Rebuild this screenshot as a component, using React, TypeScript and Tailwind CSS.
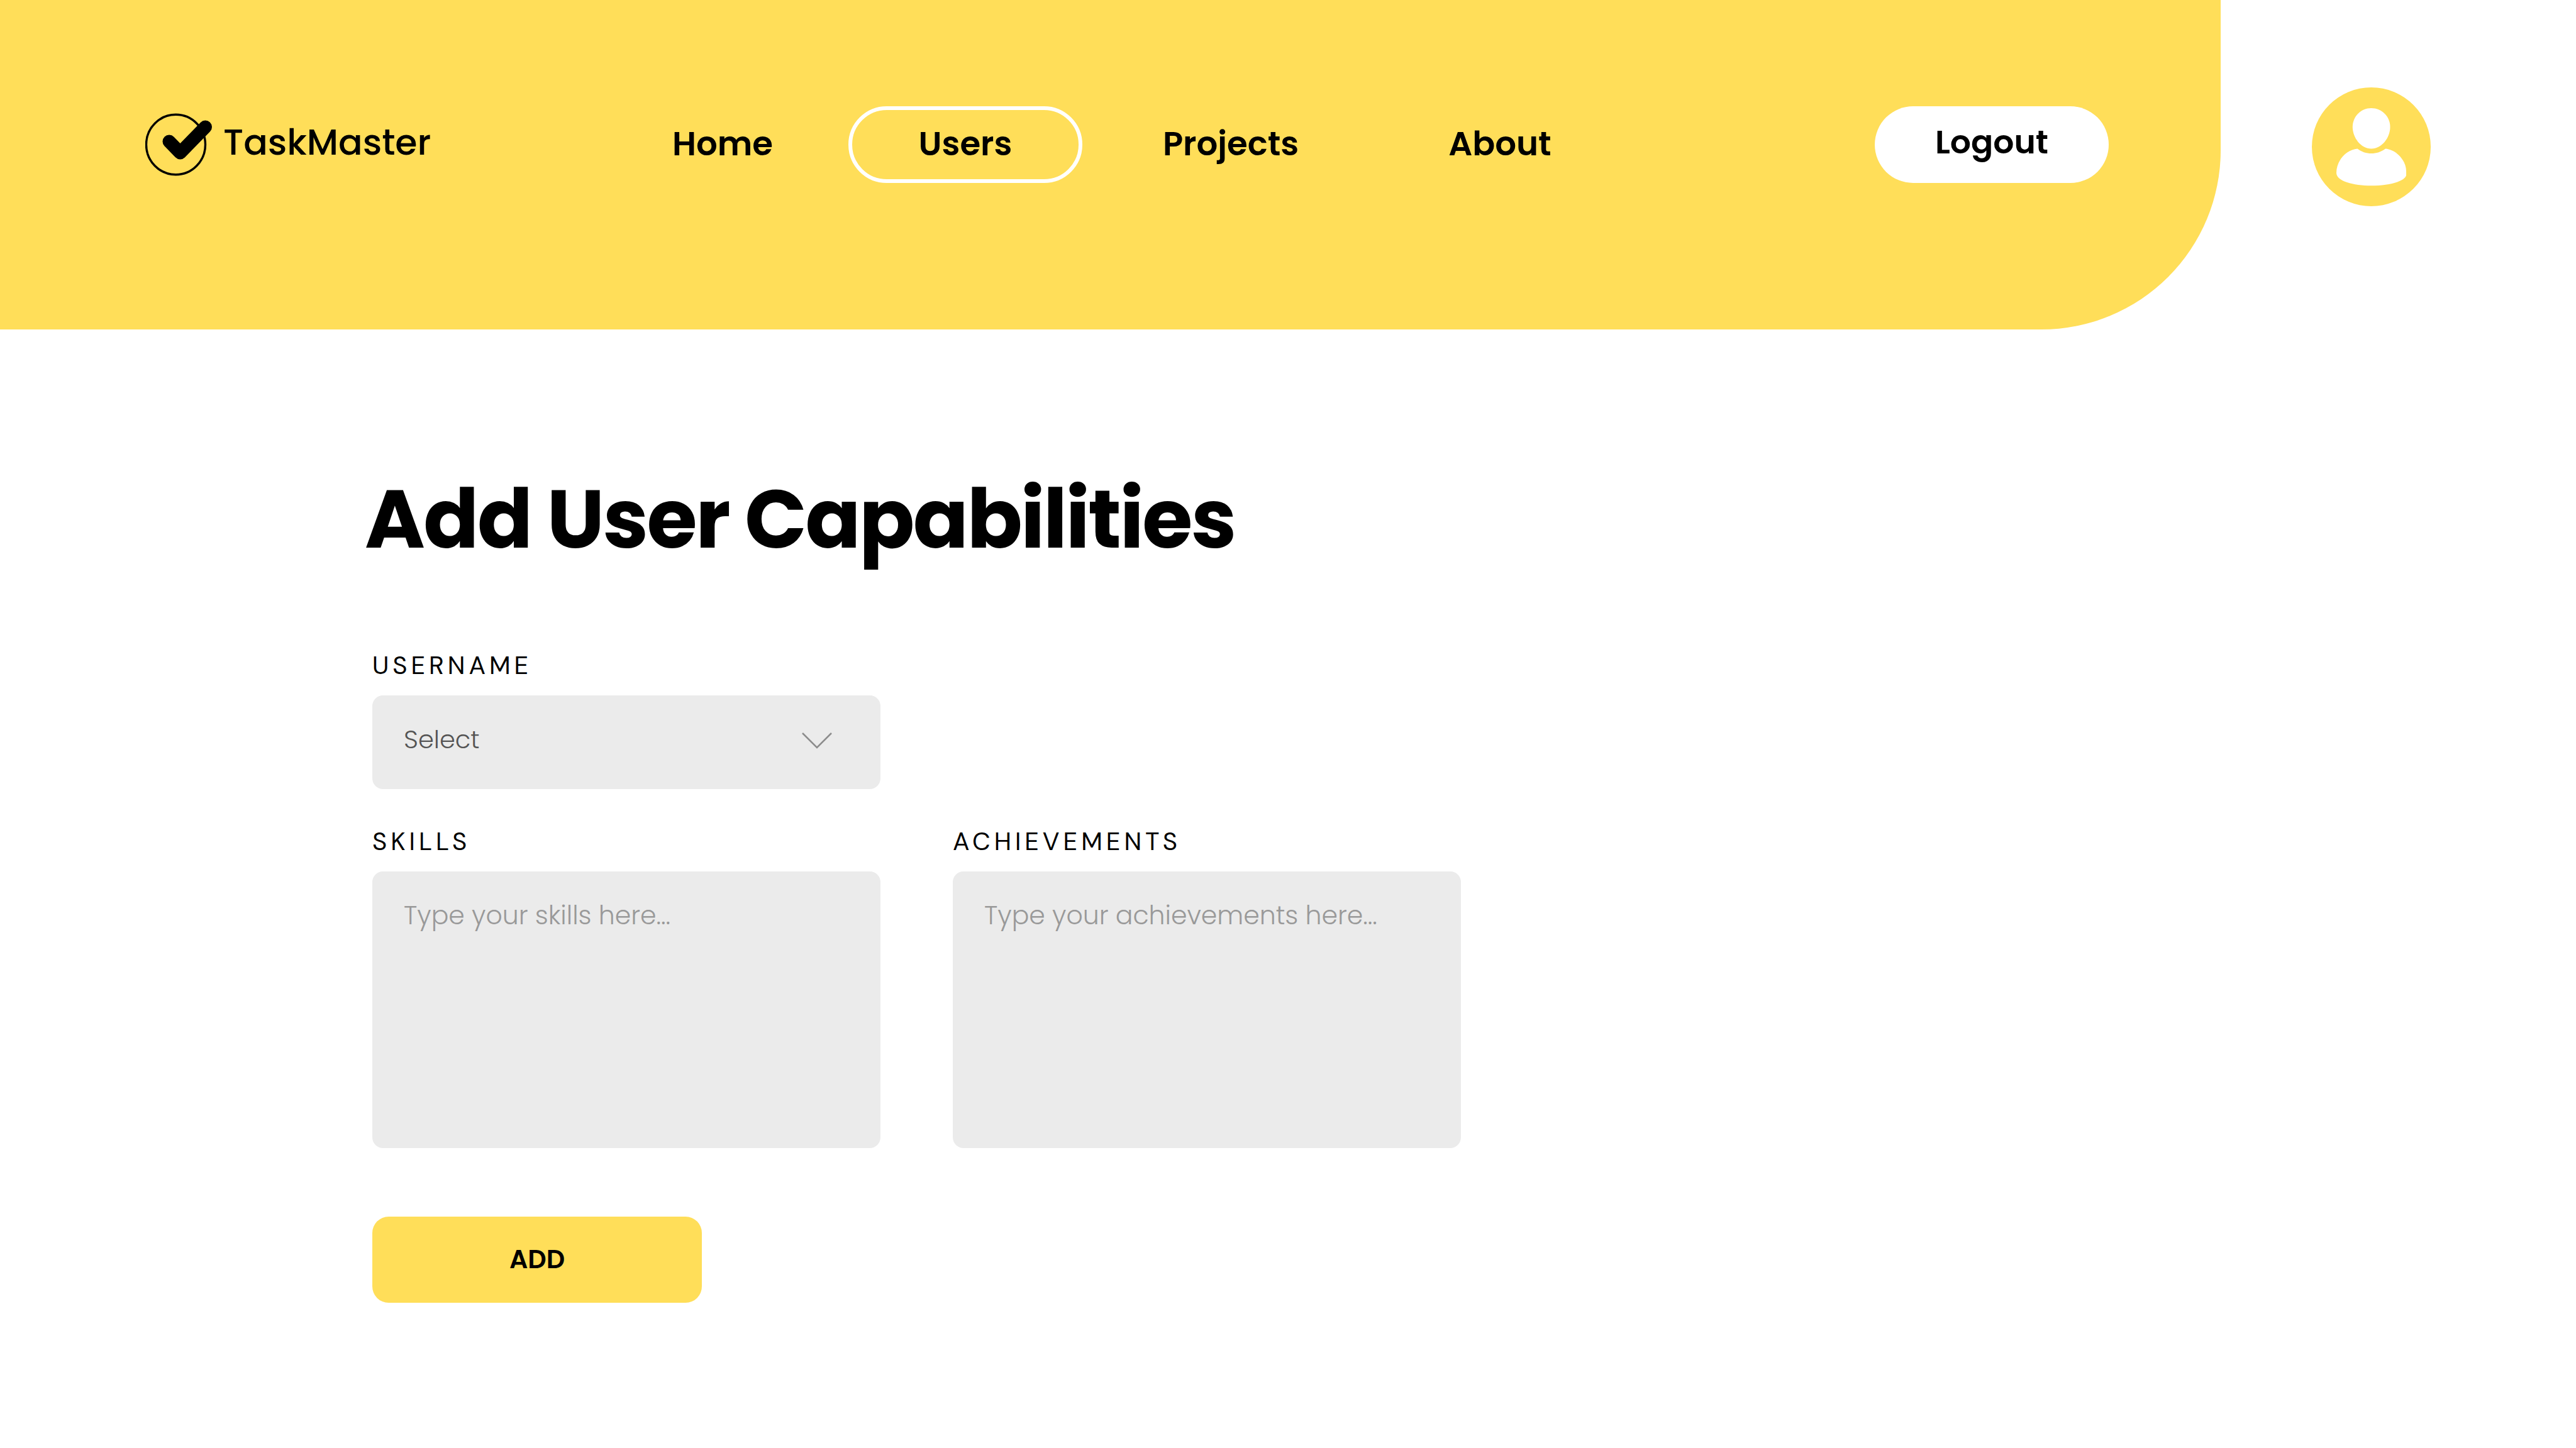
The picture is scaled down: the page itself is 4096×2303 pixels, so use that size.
import type { ReactNode } from "react";

const navLinks = [
  { label: "Home", cell: "w-[400px]", active: false },
  { label: "Users", cell: "w-[372px]", active: true },
  { label: "Projects", cell: "w-[472px]", active: false },
  { label: "About", cell: "w-[384px]", active: false },
];

function LogoMark() {
  return (
    <svg className="h-[100px] w-[108px] shrink-0" viewBox="0 0 108 100" fill="none" aria-hidden="true">
      <ellipse cx="48.5" cy="50" rx="47" ry="47.7" stroke="#000" strokeWidth="3.4" />
      <path
        d="M38 45 55.500 63 95.500 22"
        stroke="#000"
        strokeWidth="21"
        strokeLinecap="round"
        strokeLinejoin="round"
      />
    </svg>
  );
}

function Avatar() {
  return (
    <svg className="h-[189px] w-[189px]" viewBox="0 0 189 189" aria-hidden="true">
      <circle cx="94.500" cy="94.500" r="94.500" fill="#FFDE59" />
      <path
        d="M94.500 33C111 33 124.500 46 124.500 63C124.500 80 111 97.500 94.500 97.500C78 97.500 64.800 80 64.800 63C64.800 46 78 33 94.500 33Z"
        fill="#fff"
      />
      <path
        d="M72.500 97.500C85 107.500 104 107.500 117 97.500C135 99 150 117 150 133V140C147 150 122 156.300 94.500 156.300C66 156.300 39 149 39 136C39 116 55 99 72.500 97.500Z"
        fill="#fff"
      />
    </svg>
  );
}

function Field({ id, label, children }: { id: string; label: string; children: ReactNode }) {
  return (
    <div className="flex flex-col gap-[24px]">
      <label
        htmlFor={id}
        className="font-['DM_Sans','Poppins',sans-serif] text-[40px] leading-[48px] tracking-[6px] uppercase"
      >
        {label}
      </label>
      {children}
    </div>
  );
}

const textareaStyle =
  "block h-[440px] w-full resize-none rounded-[17px] bg-[#EBEBEB] px-[50px] pt-[42px] text-[41px] leading-[56px] font-light text-[#545454] outline-none placeholder:text-[#999999] placeholder:opacity-100";

export default function App() {
  return (
    <div className="min-h-screen bg-white font-['Poppins','Inter',sans-serif] text-black">
      <header className="flex">
        <div className="flex h-[524px] flex-1 items-start rounded-br-[285px] bg-[#FFDE59] pt-[169px] pr-[178px] pl-[231px]">
          <a href="#" className="flex h-[122px] w-[718px] items-center gap-[16px]">
            <LogoMark />
            <span className="pb-2 text-[57px] leading-none font-medium">TaskMaster</span>
          </a>
          <nav className="flex text-[53px] leading-none font-semibold">
            {navLinks.map((link) => (
              <a
                key={link.label}
                href="#"
                aria-current={link.active ? "page" : undefined}
                className={`flex h-[122px] items-center justify-center pb-1 ${link.cell} ${
                  link.active ? "rounded-full border-6 border-white" : ""
                }`}
              >
                {link.label}
              </a>
            ))}
          </nav>
          <button
            type="button"
            className="ml-auto h-[122px] w-[372px] rounded-full bg-white pb-2 text-[52px] leading-none font-semibold"
          >
            Logout
          </button>
        </div>
        <div className="w-[565px] pt-[139px] pl-[145px]">
          <button type="button" aria-label="Account" className="block rounded-full">
            <Avatar />
          </button>
        </div>
      </header>

      <main className="px-[592px] pt-[227px]">
        <h1 className="-ml-3 text-[130px] leading-[150px] font-bold tracking-[-0.02em]">Add User Capabilities</h1>
        <form className="mt-[133px]" onSubmit={(e) => e.preventDefault()}>
          <div className="grid grid-cols-[808px_808px] gap-x-[115px] gap-y-[59px]">
            <Field id="username" label="Username">
              <div className="relative">
                <select
                  id="username"
                  defaultValue=""
                  className="block h-[149px] w-full appearance-none rounded-[17px] bg-[#EBEBEB] px-[50px] pb-[10px] text-[40px] font-light text-[#545454] outline-none"
                >
                  <option value="">Select</option>
                </select>
                <svg
                  className="pointer-events-none absolute top-[58px] right-[76px] h-[28px] w-[50px]"
                  viewBox="0 0 50 28"
                  fill="none"
                  aria-hidden="true"
                >
                  <path d="M2 2 25 25 48 2" stroke="#8C8C8C" strokeWidth="2.500" />
                </svg>
              </div>
            </Field>
            <div className="col-start-1">
              <Field id="skills" label="Skills">
                <textarea id="skills" placeholder="Type your skills here..." className={textareaStyle} />
              </Field>
            </div>
            <Field id="achievements" label="Achievements">
              <textarea id="achievements" placeholder="Type your achievements here..." className={textareaStyle} />
            </Field>
          </div>
          <button
            type="submit"
            className="mt-[109px] h-[137px] w-[524px] rounded-[26px] bg-[#FFDE59] pb-[2px] text-[41px] leading-none font-semibold"
          >
            ADD
          </button>
        </form>
      </main>
    </div>
  );
}
